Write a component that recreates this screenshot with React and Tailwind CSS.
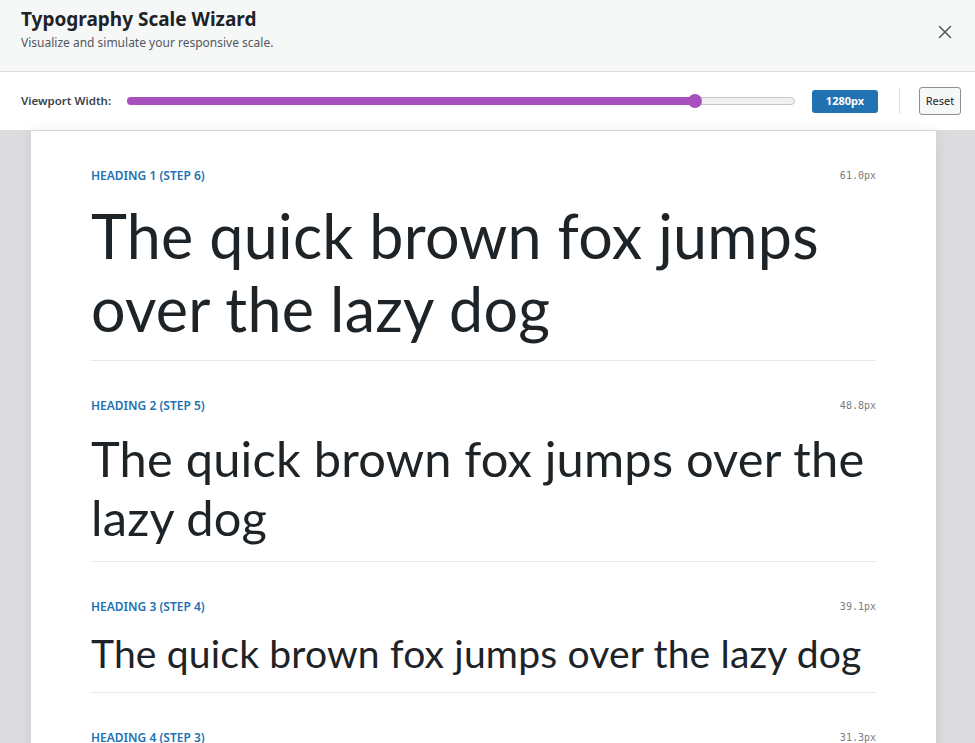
import React from "react";
import { X } from "lucide-react";

const ui = { fontFamily: '"Noto Sans", "Open Sans", sans-serif' };
const display = { fontFamily: 'Lato, "Noto Sans", sans-serif', letterSpacing: "0.004em" };
const mono = { fontFamily: '"DejaVu Sans Mono", "Liberation Mono", monospace' };

const steps = [
  { label: "Heading 1 (Step 6)", size: 61.0 },
  { label: "Heading 2 (Step 5)", size: 48.8 },
  { label: "Heading 3 (Step 4)", size: 39.1 },
  { label: "Heading 4 (Step 3)", size: 31.3 },
  { label: "Heading 5 (Step 2)", size: 25.0 },
];

export default function App() {
  return (
    <div className="h-[743px] overflow-hidden bg-[#dcdcde] text-[#1d2327]" style={ui}>
      {/* header */}
      <div className="h-[72px] bg-[#f6f7f7] border-b border-[#dcdcde] flex items-start justify-between pl-[21px] pr-[19px] pt-[7px]">
        <div>
          <h1 className="text-[19px] font-bold leading-[24px]">Typography Scale Wizard</h1>
          <p className="mt-[3px] text-[12px] leading-[17px] text-[#50575e]">Visualize and simulate your responsive scale.</p>
        </div>
        <button className="mt-[14px] text-[#50575e]">
          <X size={22} strokeWidth={1.6} />
        </button>
      </div>

      {/* toolbar */}
      <div className="h-[59px] bg-white border-b border-[#dcdcde] flex items-center pl-[21px] pr-[14px]">
        <span className="text-[11.5px] font-semibold text-[#3c434a] w-[106px]">Viewport Width:</span>
        <div className="relative w-[668px] h-[8px] rounded-full bg-[#f0f0f1] border border-[#c3c4c7]">
          <div className="absolute -left-px -top-px h-[8px] w-[568px] rounded-full bg-[#a64fbd]" />
          <div className="absolute left-[560px] -top-[4px] w-[14px] h-[14px] rounded-full bg-[#a64fbd]" />
        </div>
        <span className="ml-[17px] w-[66px] h-[23px] rounded-[3px] bg-[#2271b1] text-white text-[11px] font-bold flex items-center justify-center">
          1280px
        </span>
        <span className="ml-[21px] w-px h-[26px] bg-[#e0e0e0]" />
        <button className="ml-[19px] h-[28px] w-[42px] rounded-[3px] border border-[#8c8f94] bg-[#f6f7f7] text-[11px] text-[#1d2327]">
          Reset
        </button>
      </div>

      {/* preview */}
      <div className="pl-[31px] pr-[39px]">
        <div className="bg-white shadow-[0_0_12px_rgba(0,0,0,0.08)] px-[60px]">
          {steps.map((s) => (
            <div key={s.label} className="pt-[37px] pb-[15px] border-b border-[#e5e7eb]">
              <div className="flex items-center justify-between mb-4 leading-[15px]">
                <span className="text-[12px] font-semibold uppercase text-[#2271b1]">{s.label}</span>
                <span className="text-[10px] text-[#787c82]" style={mono}>{s.size.toFixed(1)}px</span>
              </div>
              <p className="leading-[1.2]" style={{ ...display, fontSize: s.size }}>
                The quick brown fox jumps over the lazy dog
              </p>
            </div>
          ))}
        </div>
      </div>
    </div>
  );
}
